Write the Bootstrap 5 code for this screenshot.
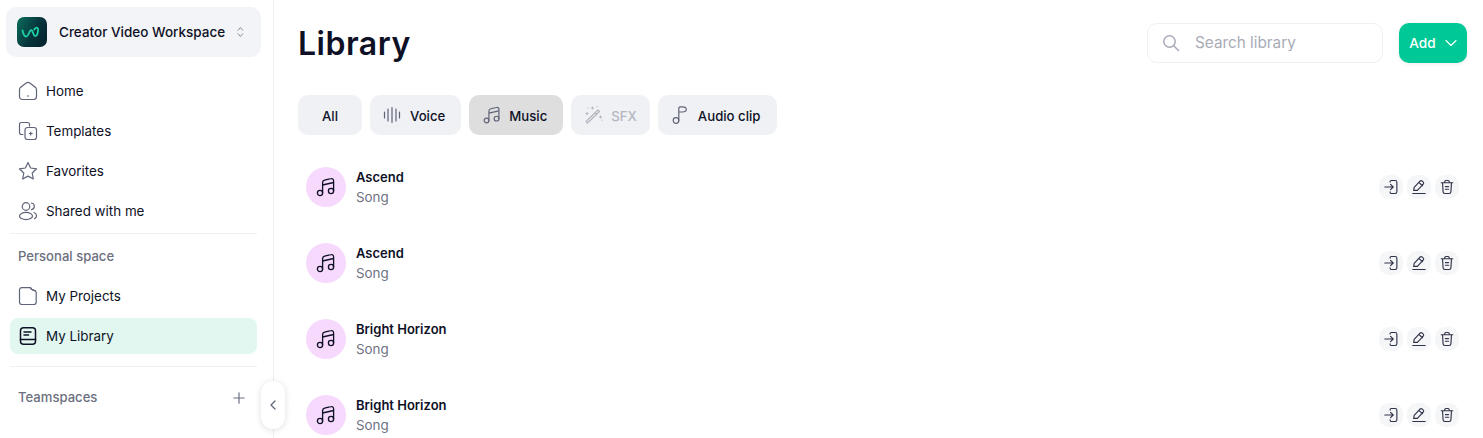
<!DOCTYPE html>
<html lang="en">
<head>
    <meta charset="UTF-8">
    <meta name="viewport" content="width=device-width, initial-scale=1.0">
    <title>Library</title>
    <link rel="stylesheet" href="https://cdn.jsdelivr.net/npm/bootstrap@5.3.0/dist/css/bootstrap.min.css">
    <style>
        html, body { height: 438px; overflow: hidden; }
        body { font-family: "Inter", "Liberation Sans", sans-serif; color: #0e1126; font-size: 13.4px; background: #fff; }
        .app-shell { height: 438px; }
        .side-panel { width: 274px; flex: none; border-right: 1px solid #eeeff2; padding: 7px 16px 0 6px; }
        .ws-switch { height: 50px; width: 255px; background: #f3f4f7; border-radius: 10px; padding: 0 17px 0 11px; font-size: 13.5px; font-weight: 500; gap: 12px; }
        .ws-logo { width: 30px; height: 30px; border-radius: 7px; background: linear-gradient(120deg, #0a6f5b 0%, #06343c 55%, #04202a 100%); flex: none; }
        .side-links { padding: 14px 0 0 4px; }
        .side-link { height: 40px; padding-left: 8px; gap: 8px; color: #0e1126; text-decoration: none; }
        .side-link svg { width: 20px; height: 20px; color: #5f6478; flex: none; }
        .side-rule { height: 1px; background: #eeeff2; margin: 2px 0 0 4px; }
        .side-title { color: #6c7080; font-weight: 500; font-size: 13.1px; padding: 1px 0 0 12px; }
        .title-personal { height: 44px; }
        .title-team { height: 60px; padding-right: 12px; }
        .rule-lower { margin-top: 12px; }
        .side-short { height: 36px; }
        .side-active { background: #e3f7f1; border-radius: 8px; }
        .side-active svg { color: #0e1126; }
        .collapse-tab { position: absolute; left: 261px; top: 381px; width: 24px; height: 48px; background: #fff; border-radius: 12px; box-shadow: 0 1px 6px rgba(20, 25, 50, .14); }
        .main-panel { min-width: 0; padding: 23px 16px 0 24px; }
        .page-title { font-size: 32px; font-weight: 600; line-height: 40px; padding-top: 1px; margin: 0 0 -1px; letter-spacing: .5px; }
        .search-box { width: 236px; height: 40px; border: 1px solid #eff0f3; border-radius: 10px; padding-left: 14px; gap: 15px; color: #a9abb8; font-size: 15.3px; }
        .search-box input { border: 0; outline: 0; min-width: 0; width: 150px; padding: 1px 0 0; color: inherit; background: transparent; }
        .search-box input::placeholder { color: #a9abb8; opacity: 1; }
        .add-btn { width: 68px; height: 40px; background: #00c896; border: 0; border-radius: 10px; color: #fff; font-weight: 500; font-size: 13.6px; gap: 9px; box-shadow: 0 1px 4px rgba(0, 0, 0, .08); }
        .filter-row { gap: 8px; margin-top: 32px; }
        .filter-btn { height: 40px; background: #f0f1f5; border: 0; border-radius: 10px; color: #0e1126; font-weight: 500; font-size: 13.2px; line-height: 22px; gap: 7px; padding: 1px 16px 0 13px; }
        .filter-btn svg { width: 20px; height: 20px; color: #5f6478; margin-top: -1px; }
        .filter-all { width: 64px; padding: 1px 0 0; }
        .filter-on { background: #dedede; }
        .filter-off { color: #b4b6c0; padding-right: 13px; }
        .filter-off svg { color: #b4b6c0; }
        .lib-list { margin-top: 14px; padding-left: 8px; }
        .lib-row { height: 76px; gap: 10px; }
        .lib-thumb { width: 40px; height: 40px; border-radius: 50%; background: #f6d9fd; flex: none; }
        .lib-thumb svg { width: 24px; height: 24px; }
        .lib-name { font-weight: 600; font-size: 13px; line-height: 20px; }
        .lib-kind { color: #6f7383; line-height: 20px; }
        .row-tools { gap: 4px; padding-right: 8px; }
        .tool-btn { width: 24px; height: 24px; padding: 0; border: 0; border-radius: 10px; background: #f5f6f8; color: #30344a; }
        .tool-btn svg { width: 16px; height: 16px; }
    </style>
</head>
<body>
    <svg width="0" height="0" class="position-absolute">
        <defs>
            <g id="ic-notes" fill="none" stroke="currentColor" stroke-width="1.3" stroke-linecap="round" stroke-linejoin="round">
                <circle cx="6" cy="18" r="2.6"/><circle cx="17" cy="16" r="2.6"/>
                <path d="M8.600 18V7.600c0-1.400.8-2.200 2-2.500l6.200-1.400c1.600-.4 2.800.4 2.800 2V16M8.600 10l11-2.500"/>
            </g>
            <g id="ic-enter" fill="none" stroke="currentColor" stroke-width="1.3" stroke-linecap="round" stroke-linejoin="round">
                <path d="M8 3.500V3c0-.8.500-1.300 1.300-1.300h4.400c1.200 0 1.900.7 1.900 1.900v10.800c0 1.200-.7 1.900-1.900 1.900H9.300c-.8 0-1.300-.5-1.300-1.300v-.5M2 9h9.500M8.500 6l3 3-3 3"/>
            </g>
            <g id="ic-edit" fill="none" stroke="currentColor" stroke-width="1.3" stroke-linecap="round" stroke-linejoin="round">
                <path d="M3 12.800 3.600 9.500l6.500-7c.8-.8 1.800-.8 2.600-.1l.9.800c.8.700.8 1.800.1 2.600l-6.500 7zM9 4l4 3.600M2 16.300h14"/>
            </g>
            <g id="ic-trash" fill="none" stroke="currentColor" stroke-width="1.3" stroke-linecap="round" stroke-linejoin="round">
                <path d="M2.500 4.200h13M6.500 4V3c0-.8.500-1.300 1.300-1.300h2.400c.8 0 1.300.5 1.300 1.300v1M4 4.500l.6 10c.1 1.100.7 1.800 1.900 1.800h5c1.200 0 1.800-.7 1.900-1.800l.6-10M7.200 8.500h3.600M7.200 11.500h3.600"/>
            </g>
        </defs>
    </svg>
    <div class="app-shell d-flex position-relative">
        <aside class="side-panel">
            <div class="ws-switch d-flex align-items-center">
                <span class="ws-logo d-flex align-items-center justify-content-center">
                    <svg width="22" height="14" viewBox="0 0 22 14" fill="none" stroke="#1fd0a4" stroke-width="1.800" stroke-linecap="round" stroke-linejoin="round"><path d="M1.500 5.500c.8 3.500 2 6 3.500 6s2.500-2 3.500-4.500c.7-1.700 1.500-2.500 2.500-1.500s1.300 5 3 5.500c2 .5 3.500-4 3-7-.4-2-2.500-2-3.700.5"/></svg>
                </span>
                <span class="flex-grow-1 text-nowrap">Creator Video Workspace</span>
                <svg width="10" height="16" viewBox="0 0 10 16" fill="none" stroke="#70748a" stroke-width="1.200" stroke-linecap="round" stroke-linejoin="round"><path d="M1.500 5.500 5 1.500l3.500 4M1.500 10.500 5 14.500l3.500-4"/></svg>
            </div>
            <nav class="side-links d-flex flex-column">
                <a class="side-link d-flex align-items-center" href="#">
                    <svg viewBox="0 0 20 20" fill="none" stroke="currentColor" stroke-width="1.200" stroke-linejoin="round" stroke-linecap="round"><path d="M1.500 8.500c0-1 .4-1.700 1.200-2.300l5.500-4.200c1.100-.8 2.500-.8 3.600 0l5.500 4.200c.8.600 1.200 1.300 1.200 2.300v7c0 1.800-1.200 3-3 3h-11c-1.800 0-3-1.200-3-3z"/><path d="M10 14.500v.8"/></svg>
                    Home
                </a>
                <a class="side-link d-flex align-items-center" href="#">
                    <svg viewBox="0 0 20 20" fill="none" stroke="currentColor" stroke-width="1.200" stroke-linejoin="round" stroke-linecap="round"><path d="M5 13.500H3.500c-1.300 0-2-.7-2-2v-8c0-1.300.7-2 2-2h6c1.300 0 2 .7 2 2V5"/><rect x="7" y="6.500" width="11.500" height="12" rx="2.500"/><path d="M12.750 11v3M11.250 12.500h3"/></svg>
                    Templates
                </a>
                <a class="side-link d-flex align-items-center" href="#">
                    <svg viewBox="0 0 20 20" fill="none" stroke="currentColor" stroke-width="1.200" stroke-linejoin="round"><path d="m10 1.500 2.600 5.500 6 .8-4.400 4.200 1.100 6L10 15.100 4.700 18l1.100-6L1.400 7.800l6-.8z"/></svg>
                    Favorites
                </a>
                <a class="side-link d-flex align-items-center" href="#">
                    <svg viewBox="0 0 20 20" fill="none" stroke="currentColor" stroke-width="1.200" stroke-linecap="round"><circle cx="8" cy="5.500" r="3.800"/><ellipse cx="8" cy="15" rx="6.500" ry="3.600"/><path d="M13.500 2c1.800.3 2.800 1.700 2.800 3.300s-1 3-2.800 3.300M16 11.500c1.600.6 2.500 1.800 2.500 3.300 0 1.200-.7 2.200-2 2.900"/></svg>
                    Shared with me
                </a>
            </nav>
            <div class="side-rule"></div>
            <div class="side-title title-personal d-flex align-items-center">Personal space</div>
            <nav class="d-flex flex-column gap-1 ps-1">
                <a class="side-link side-short d-flex align-items-center" href="#">
                    <svg viewBox="0 0 20 20" fill="none" stroke="currentColor" stroke-width="1.200" stroke-linejoin="round"><path d="M1.500 4c0-1.400.8-2.300 2.300-2.300h8.700l1 1.500 3.500 1.500c.8.400 1.200 1 1.200 1.800v9.500c0 1.500-1 2.500-2.500 2.500H4c-1.500 0-2.500-1-2.500-2.500z"/><path d="M12.500 1.700c.4 1.300 1 2.300 5.500 3.300"/></svg>
                    My Projects
                </a>
                <a class="side-link side-short side-active d-flex align-items-center" href="#">
                    <svg viewBox="0 0 20 20" fill="none" stroke="currentColor" stroke-width="1.500" stroke-linecap="round" stroke-linejoin="round"><rect x="2.500" y="1.700" width="15" height="16.600" rx="3"/><path d="M2.500 13.500h15M6 6h7M6 9h4.500"/></svg>
                    My Library
                </a>
            </nav>
            <div class="side-rule rule-lower"></div>
            <div class="side-title title-team d-flex align-items-center justify-content-between">
                <span>Teamspaces</span>
                <svg width="12" height="12" viewBox="0 0 12 12" stroke="#6c7080" stroke-width="1.200" stroke-linecap="round"><path d="M6 .8v10.400M.8 6h10.400"/></svg>
            </div>
        </aside>
        <button type="button" class="collapse-tab border-0 p-0 d-flex align-items-center justify-content-center">
            <svg width="8" height="12" viewBox="0 0 8 12" fill="none" stroke="#5f6478" stroke-width="1.200" stroke-linecap="round" stroke-linejoin="round"><path d="M6 2 2 6l4 4"/></svg>
        </button>

        <main class="main-panel flex-grow-1">
            <div class="d-flex align-items-center">
                <h1 class="page-title flex-grow-1">Library</h1>
                <label class="search-box d-flex align-items-center me-3 mb-0">
                    <svg width="18" height="18" viewBox="0 0 18 18" fill="none" stroke="#a9abb8" stroke-width="1.500" stroke-linecap="round"><circle cx="7.500" cy="7.500" r="5.700"/><path d="m12 12 4.500 4.500"/></svg>
                    <input type="text" placeholder="Search library">
                </label>
                <button type="button" class="add-btn d-flex align-items-center justify-content-center">
                    Add
                    <svg width="12" height="8" viewBox="0 0 12 8" fill="none" stroke="#fff" stroke-width="1.100" stroke-linecap="round" stroke-linejoin="round"><path d="m1 1.500 5 5 5-5"/></svg>
                </button>
            </div>

            <div class="filter-row d-flex">
                <button type="button" class="filter-btn filter-all d-flex align-items-center justify-content-center">All</button>
                <button type="button" class="filter-btn d-flex align-items-center">
                    <svg viewBox="0 0 20 20" fill="none" stroke="currentColor" stroke-width="1.200" stroke-linecap="round"><path d="M1.500 7v6M5 4v12M9 2.500v15M13 4v12M16.500 7v6"/></svg>
                    Voice
                </button>
                <button type="button" class="filter-btn filter-on d-flex align-items-center">
                    <svg viewBox="2 1 20 22"><use href="#ic-notes"/></svg>
                    Music
                </button>
                <button type="button" class="filter-btn filter-off d-flex align-items-center">
                    <svg viewBox="0 0 20 20" fill="none" stroke="currentColor" stroke-width="1.200" stroke-linecap="round" stroke-linejoin="round"><path d="m2 16.500 1.500 1.500L15.500 6.500 14 5zM11.500 8l1.500 1.500M4 3v.1M8.500 2v2M7.500 3h2M3 7.500v2M2 8.500h2M16.500 11v2M15.500 12h2M13 1.500v.1M18 15v.1"/></svg>
                    SFX
                </button>
                <button type="button" class="filter-btn d-flex align-items-center">
                    <svg viewBox="0 0 20 20" fill="none" stroke="currentColor" stroke-width="1.200" stroke-linecap="round" stroke-linejoin="round"><circle cx="5" cy="15.500" r="2.800"/><path d="M7.800 15.500V3.500c0-1 .6-1.700 1.700-1.700h1.800c3 0 4 1.200 4 2.700S14.300 7 11.300 7H7.800"/></svg>
                    Audio clip
                </button>
            </div>

            <div class="lib-list">
                <div class="lib-row d-flex align-items-center">
                    <div class="lib-thumb d-flex align-items-center justify-content-center"><svg viewBox="0 0 24 24"><use href="#ic-notes"/></svg></div>
                    <div class="flex-grow-1"><div class="lib-name">Ascend</div><div class="lib-kind">Song</div></div>
                    <div class="row-tools d-flex">
                        <button type="button" class="tool-btn d-flex align-items-center justify-content-center"><svg viewBox="0 0 18 18"><use href="#ic-enter"/></svg></button>
                        <button type="button" class="tool-btn d-flex align-items-center justify-content-center"><svg viewBox="0 0 18 18"><use href="#ic-edit"/></svg></button>
                        <button type="button" class="tool-btn d-flex align-items-center justify-content-center"><svg viewBox="0 0 18 18"><use href="#ic-trash"/></svg></button>
                    </div>
                </div>
                <div class="lib-row d-flex align-items-center">
                    <div class="lib-thumb d-flex align-items-center justify-content-center"><svg viewBox="0 0 24 24"><use href="#ic-notes"/></svg></div>
                    <div class="flex-grow-1"><div class="lib-name">Ascend</div><div class="lib-kind">Song</div></div>
                    <div class="row-tools d-flex">
                        <button type="button" class="tool-btn d-flex align-items-center justify-content-center"><svg viewBox="0 0 18 18"><use href="#ic-enter"/></svg></button>
                        <button type="button" class="tool-btn d-flex align-items-center justify-content-center"><svg viewBox="0 0 18 18"><use href="#ic-edit"/></svg></button>
                        <button type="button" class="tool-btn d-flex align-items-center justify-content-center"><svg viewBox="0 0 18 18"><use href="#ic-trash"/></svg></button>
                    </div>
                </div>
                <div class="lib-row d-flex align-items-center">
                    <div class="lib-thumb d-flex align-items-center justify-content-center"><svg viewBox="0 0 24 24"><use href="#ic-notes"/></svg></div>
                    <div class="flex-grow-1"><div class="lib-name">Bright Horizon</div><div class="lib-kind">Song</div></div>
                    <div class="row-tools d-flex">
                        <button type="button" class="tool-btn d-flex align-items-center justify-content-center"><svg viewBox="0 0 18 18"><use href="#ic-enter"/></svg></button>
                        <button type="button" class="tool-btn d-flex align-items-center justify-content-center"><svg viewBox="0 0 18 18"><use href="#ic-edit"/></svg></button>
                        <button type="button" class="tool-btn d-flex align-items-center justify-content-center"><svg viewBox="0 0 18 18"><use href="#ic-trash"/></svg></button>
                    </div>
                </div>
                <div class="lib-row d-flex align-items-center">
                    <div class="lib-thumb d-flex align-items-center justify-content-center"><svg viewBox="0 0 24 24"><use href="#ic-notes"/></svg></div>
                    <div class="flex-grow-1"><div class="lib-name">Bright Horizon</div><div class="lib-kind">Song</div></div>
                    <div class="row-tools d-flex">
                        <button type="button" class="tool-btn d-flex align-items-center justify-content-center"><svg viewBox="0 0 18 18"><use href="#ic-enter"/></svg></button>
                        <button type="button" class="tool-btn d-flex align-items-center justify-content-center"><svg viewBox="0 0 18 18"><use href="#ic-edit"/></svg></button>
                        <button type="button" class="tool-btn d-flex align-items-center justify-content-center"><svg viewBox="0 0 18 18"><use href="#ic-trash"/></svg></button>
                    </div>
                </div>
            </div>
        </main>
    </div>
    <script src="https://cdn.jsdelivr.net/npm/bootstrap@5.3.0/dist/js/bootstrap.bundle.min.js"></script>
</body>
</html>
